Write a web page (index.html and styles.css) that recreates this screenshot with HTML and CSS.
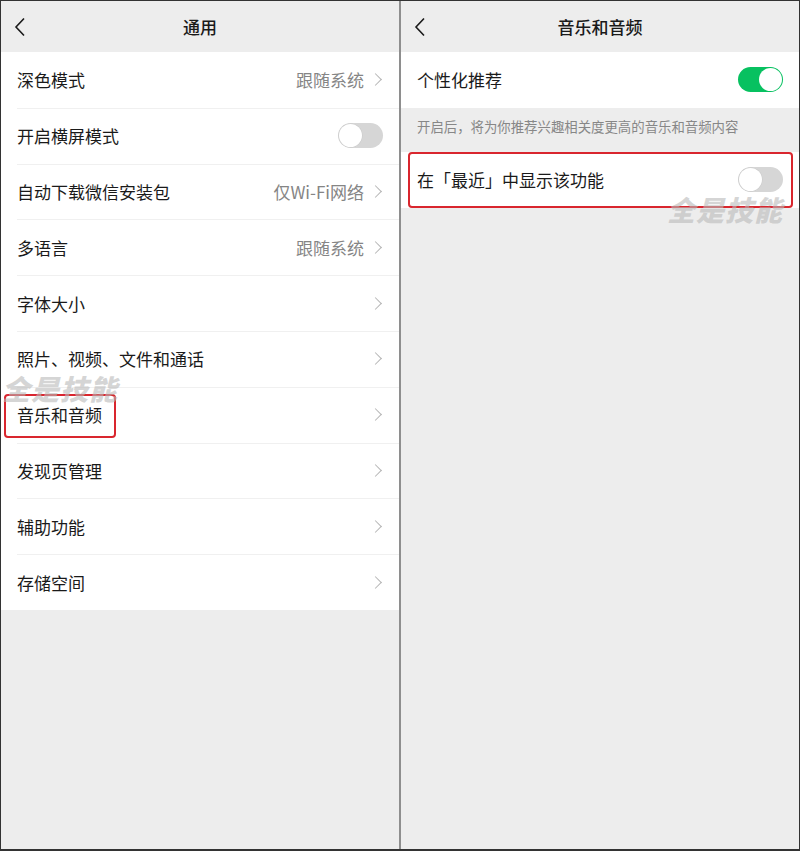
FILE: index.html
```html
<!DOCTYPE html>
<html lang="zh-CN">
<head>
<meta charset="utf-8">
<title>通用 / 音乐和音频</title>
<link rel="stylesheet" href="styles.css">
</head>
<body>
<div class="frame">
  <section class="panel">
    <header class="nav">
      <svg class="back" width="12" height="20" viewBox="0 0 12 20"><path d="M10 1.5 L2 10 L10 18.5" fill="none" stroke="#1a1a1a" stroke-width="1.6"/></svg>
      <h1 class="title">通用</h1>
    </header>
    <ul class="list">
      <li class="row"><span class="label">深色模式</span><span class="value">跟随系统</span><span class="chev"></span></li>
      <li class="row"><span class="label">开启横屏模式</span><span class="switch"></span></li>
      <li class="row"><span class="label">自动下载微信安装包</span><span class="value">仅Wi-Fi网络</span><span class="chev"></span></li>
      <li class="row"><span class="label">多语言</span><span class="value">跟随系统</span><span class="chev"></span></li>
      <li class="row"><span class="label">字体大小</span><span class="chev"></span></li>
      <li class="row"><span class="label">照片、视频、文件和通话</span><span class="chev"></span></li>
      <li class="row"><span class="label">音乐和音频</span><span class="chev"></span><span class="mark mark-left"></span><span class="wm wm-left">全是技能</span></li>
      <li class="row"><span class="label">发现页管理</span><span class="chev"></span></li>
      <li class="row"><span class="label">辅助功能</span><span class="chev"></span></li>
      <li class="row"><span class="label">存储空间</span><span class="chev"></span></li>
    </ul>
  </section>
  <div class="divider"></div>
  <section class="panel">
    <header class="nav">
      <svg class="back" width="12" height="20" viewBox="0 0 12 20"><path d="M10 1.5 L2 10 L10 18.5" fill="none" stroke="#1a1a1a" stroke-width="1.6"/></svg>
      <h1 class="title">音乐和音频</h1>
    </header>
    <ul class="list">
      <li class="row"><span class="label">个性化推荐</span><span class="switch on"></span></li>
    </ul>
    <p class="desc">开启后，将为你推荐兴趣相关度更高的音乐和音频内容</p>
    <ul class="list">
      <li class="row"><span class="label">在「最近」中显示该功能</span><span class="switch"></span><span class="mark mark-right"></span><span class="wm wm-right">全是技能</span></li>
    </ul>
  </section>
</div>
</body>
</html>
```

FILE: styles.css
```css
* { box-sizing: border-box; }
html, body { margin: 0; padding: 0; }
body {
  font-family: "Noto Sans CJK SC", "Noto Sans", sans-serif;
  color: #1a1a1a;
  background: #ededed;
}
.frame {
  width: 800px;
  height: 851px;
  border: 1px solid #333;
  border-bottom-width: 2px;
  display: flex;
  background: #ededed;
  overflow: hidden;
}
.panel {
  flex: 1;
  display: flex;
  flex-direction: column;
  background: #ededed;
}
.divider {
  width: 2px;
  background: #8e8e8e;
}
.nav {
  height: 51px;
  position: relative;
  display: flex;
  align-items: center;
  justify-content: center;
}
.back {
  position: absolute;
  left: 13px;
  top: 16px;
}
.title {
  margin: 0;
  font-size: 17px;
  font-weight: 500;
  line-height: 1;
}
.list {
  list-style: none;
  margin: 0;
  padding: 0;
  background: #fff;
}
.row {
  position: relative;
  height: 55.8px;
  display: flex;
  align-items: center;
  padding: 0 16px;
  font-size: 17px;
}
.row + .row::before {
  content: "";
  position: absolute;
  left: 16px;
  right: 0;
  top: 0;
  height: 1px;
  background: #f0f0f0;
}
.label { flex: 1; }
.value {
  color: #858585;
  margin-right: 7px;
}
.chev {
  width: 9px;
  height: 9px;
  border-top: 1.5px solid #b5b5b5;
  border-right: 1.5px solid #b5b5b5;
  transform: rotate(45deg);
  margin-right: 3px;
}
.switch {
  width: 45px;
  height: 25px;
  border-radius: 13px;
  background: #d6d6d6;
  position: relative;
}
.switch::after {
  content: "";
  position: absolute;
  left: 1px;
  top: 1px;
  width: 23px;
  height: 23px;
  border-radius: 50%;
  background: #fff;
  box-shadow: 0 0 0 0.5px #c8c8c8;
}
.switch.on { background: #07c160; }
.switch.on::after { left: 21px; box-shadow: none; }
.desc {
  margin: 0;
  height: 44px;
  padding: 8px 16px 0;
  font-size: 13.4px;
  color: #878787;
}
.mark {
  position: absolute;
  border: 2px solid #d9262e;
  border-radius: 4px;
  pointer-events: none;
}
.mark-left { left: 3px; top: 7px; width: 112px; height: 44px; }
.mark-right { left: 7px; right: 6px; top: 0; bottom: 0; }
.wm {
  position: absolute;
  font-size: 28px;
  font-weight: 900;
  font-style: italic;
  color: rgba(185, 185, 185, 0.6);
  letter-spacing: 1px;
  pointer-events: none;
  line-height: 1;
}
.wm-left { left: 1px; top: -13px; }
.wm-right { left: 266px; top: 43px; }
```
